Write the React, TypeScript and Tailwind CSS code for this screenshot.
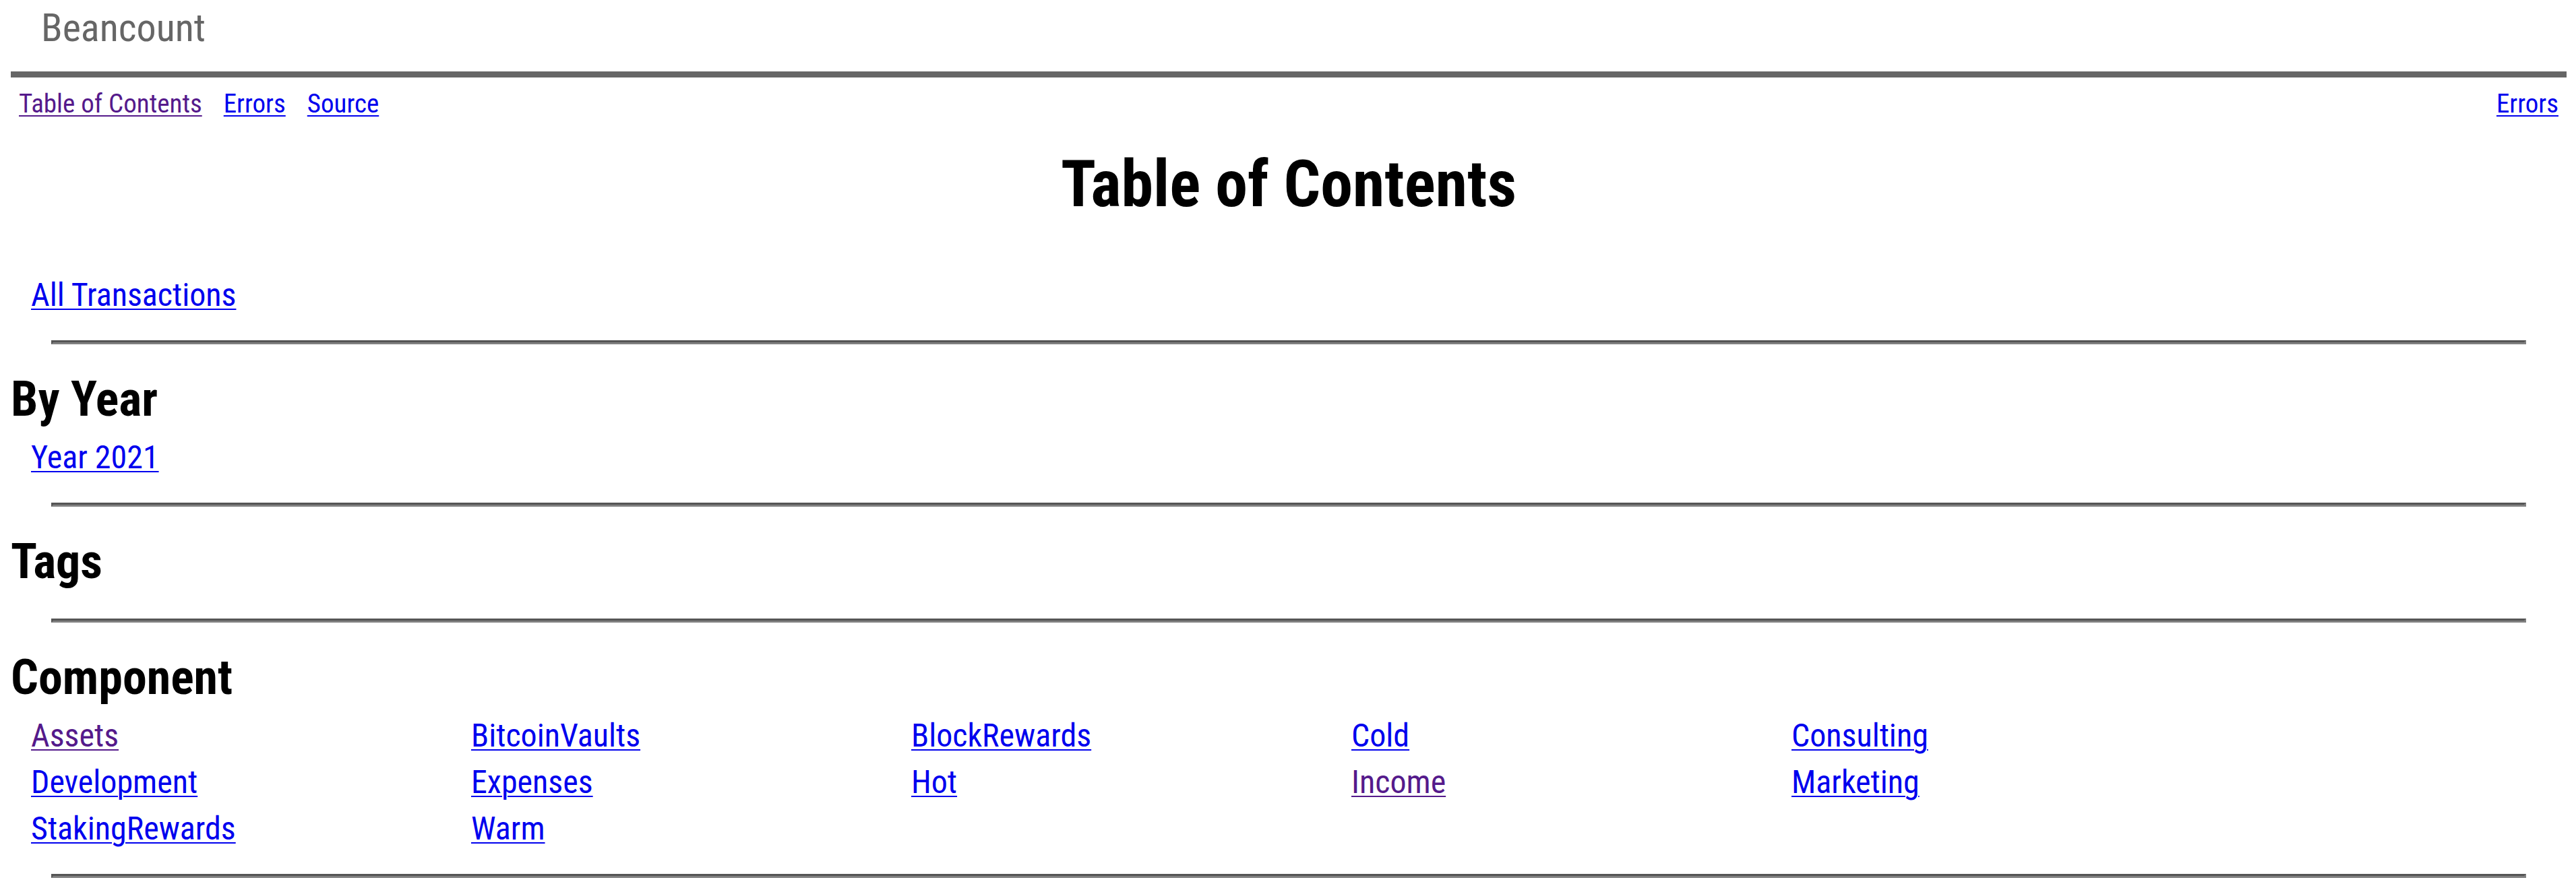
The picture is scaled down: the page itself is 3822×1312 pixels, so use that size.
import type { ReactNode } from "react";

type LinkItem = { label: string; visited?: boolean };

const components: LinkItem[] = [
  { label: "Assets", visited: true },
  { label: "BitcoinVaults" },
  { label: "BlockRewards" },
  { label: "Cold" },
  { label: "Consulting" },
  { label: "Development" },
  { label: "Expenses" },
  { label: "Hot" },
  { label: "Income", visited: true },
  { label: "Marketing" },
  { label: "StakingRewards" },
  { label: "Warm" },
];

function PageLink({ label, visited }: LinkItem) {
  return (
    <a
      href="#"
      className={
        visited
          ? "text-[#551a8b] underline decoration-2 underline-offset-4"
          : "text-[#0000ee] underline decoration-2 underline-offset-4"
      }
    >
      {label}
    </a>
  );
}

function Rule() {
  return (
    <hr className="mx-[60px] mt-[33px] mb-[39px] h-0 border-[3px] border-t-[#555555] border-r-[#808080] border-b-[#808080] border-l-[#555555]" />
  );
}

function LinkGrid({ items }: { items: LinkItem[] }) {
  return (
    <ul className="ml-[30px] grid grid-cols-[repeat(auto-fill,653px)] leading-[69px]">
      {items.map((item) => (
        <li key={item.label}>
          <PageLink {...item} />
        </li>
      ))}
    </ul>
  );
}

function Section({ title, children }: { title: string; children?: ReactNode }) {
  return (
    <section className="flex flex-col">
      <h2 className="pb-2 text-[72px] leading-[86px] font-bold">{title}</h2>
      {children}
      <Rule />
    </section>
  );
}

export default function App() {
  return (
    <div className="flow-root bg-white pr-[14px] pl-4 font-['Roboto_Condensed',Roboto,sans-serif] text-[48px] text-black">
      <header className="border-b-[9px] border-[#666666] pt-[7px] pb-[31px] pl-[45px] text-[58px] leading-[68px] text-[#666666]">
        Beancount
      </header>
      <nav className="flex justify-between px-3 pt-[17px] text-[39px] leading-[44px]">
        <ul className="flex gap-8">
          <li><PageLink label="Table of Contents" visited /></li>
          <li><PageLink label="Errors" /></li>
          <li><PageLink label="Source" /></li>
        </ul>
        <PageLink label="Errors" />
      </nav>
      <main>
        <h1 className="mt-[41px] mb-[74px] text-center text-[96px] leading-[112px] font-bold">
          Table of Contents
        </h1>
        <LinkGrid items={[{ label: "All Transactions" }]} />
        <Rule />
        <Section title="By Year">
          <LinkGrid items={[{ label: "Year 2021" }]} />
        </Section>
        <Section title="Tags" />
        <Section title="Component">
          <LinkGrid items={components} />
        </Section>
      </main>
    </div>
  );
}
